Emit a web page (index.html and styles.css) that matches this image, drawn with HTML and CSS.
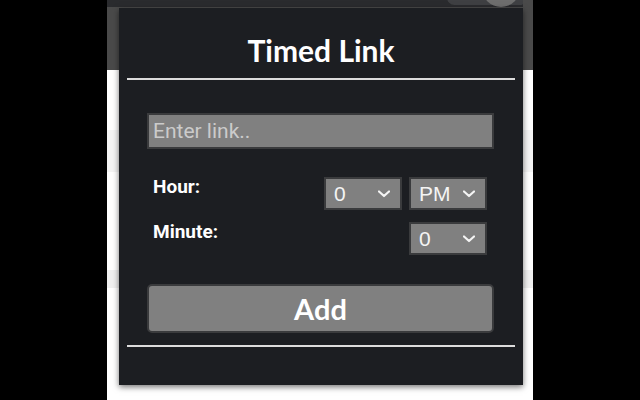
FILE: index.html
```html
<!DOCTYPE html>
<html>
<head>
<meta charset="utf-8">
<link rel="stylesheet" href="styles.css">
</head>
<body>
<div class="browser">
  <div class="toolbar">
    <div class="strip">
      <div class="omni"></div>
      <div class="avatar"></div>
    </div>
  </div>
  <div class="page">
    <div class="band band-a"></div>
    <div class="band band-b"></div>
  </div>
  <div class="popup">
    <h1 class="title">Timed Link</h1>
    <div class="rule"></div>
    <div class="form">
      <input class="link" type="text" placeholder="Enter link..">
      <div class="row row-hour">
        <span class="label">Hour:</span>
        <div class="selects">
          <div class="select"><span>0</span><svg class="chev" width="12" height="8" viewBox="0 0 12 8"><polyline points="1,1.5 6,6 11,1.5"/></svg></div>
          <div class="select"><span>PM</span><svg class="chev" width="12" height="8" viewBox="0 0 12 8"><polyline points="1,1.5 6,6 11,1.5"/></svg></div>
        </div>
      </div>
      <div class="row row-minute">
        <span class="label">Minute:</span>
        <div class="selects">
          <div class="select"><span>0</span><svg class="chev" width="12" height="8" viewBox="0 0 12 8"><polyline points="1,1.5 6,6 11,1.5"/></svg></div>
        </div>
      </div>
      <button class="add">Add</button>
    </div>
    <div class="rule rule-bottom"></div>
  </div>
</div>
</body>
</html>
```

FILE: styles.css
```css
html, body {
  margin: 0;
  padding: 0;
  background: #000;
}
body {
  width: 640px;
  height: 400px;
  overflow: hidden;
}
.browser {
  position: relative;
  width: 426px;
  height: 400px;
  margin: 0 auto;
  background: #fff;
  display: flex;
  flex-direction: column;
}
.toolbar {
  height: 70px;
  background: #4a4a4a;
}
.strip {
  height: 7px;
  width: 416px;
  background: #2a2b2e;
  position: relative;
  overflow: hidden;
}
.omni {
  position: absolute;
  left: 340px;
  top: -10px;
  width: 80px;
  height: 15px;
  border-radius: 8px;
  background: #3f4043;
}
.avatar {
  position: absolute;
  left: 375px;
  top: -31px;
  width: 38px;
  height: 38px;
  border-radius: 50%;
  background: #6e6e6e;
}
.page {
  flex: 1;
  display: flex;
  flex-direction: column;
}
.band-a {
  margin-top: 60px;
  height: 42px;
  background: #f4f4f4;
}
.band-b {
  margin-top: 98px;
  height: 18px;
  background: #f0f0f0;
}
.popup {
  position: absolute;
  left: 12px;
  top: 8px;
  width: 404px;
  height: 377px;
  background: #1c1e22;
  box-shadow: 0 2px 6px rgba(0, 0, 0, 0.55);
  display: flex;
  flex-direction: column;
}
.title {
  margin: 24px 0 0;
  font-family: Lato, "Noto Sans", sans-serif;
  font-weight: 700;
  font-size: 30px;
  line-height: 36px;
  color: #fff;
  text-align: center;
}
.rule {
  margin: 10px 8px 0;
  height: 2px;
  background: #dcdcdc;
}
.rule-bottom {
  margin-top: 12px;
}
.form {
  padding: 33px 29px 0 28px;
  display: flex;
  flex-direction: column;
}
.link {
  box-sizing: border-box;
  width: 100%;
  height: 36px;
  margin: 0;
  padding: 0 4px;
  border: 2px solid #3a3b3d;
  background: #808080;
  color: #fff;
  font-family: Roboto, "Liberation Sans", sans-serif;
  font-size: 21px;
  outline: none;
}
.link::placeholder {
  color: #cbcbcb;
}
.row {
  display: flex;
  align-items: flex-start;
  padding: 0 7px 0 6px;
}
.row-hour {
  margin-top: 28px;
}
.row-minute {
  margin-top: 12px;
}
.label {
  flex: 1;
  font-family: Roboto, "Liberation Sans", sans-serif;
  font-weight: 700;
  font-size: 19px;
  line-height: 20px;
  color: #fff;
}
.selects {
  display: flex;
  gap: 7px;
}
.select {
  box-sizing: border-box;
  width: 78px;
  height: 33px;
  background: #808080;
  border: 2px solid #3a3b3d;
  display: flex;
  align-items: center;
  justify-content: space-between;
  padding: 0 10px 0 8px;
  font-family: "Liberation Sans", Arial, sans-serif;
  font-size: 21px;
  color: #f4f4f4;
}
.chev polyline {
  fill: none;
  stroke: #f4f4f4;
  stroke-width: 2.2;
  stroke-linecap: round;
  stroke-linejoin: round;
}
.add {
  margin-top: 29px;
  height: 49px;
  width: 100%;
  box-sizing: border-box;
  border: 2px solid #3a3b3d;
  border-radius: 5px;
  background: #808080;
  color: #fff;
  font-family: Lato, "Noto Sans", sans-serif;
  font-weight: 700;
  font-size: 29px;
  padding: 0;
}
```
